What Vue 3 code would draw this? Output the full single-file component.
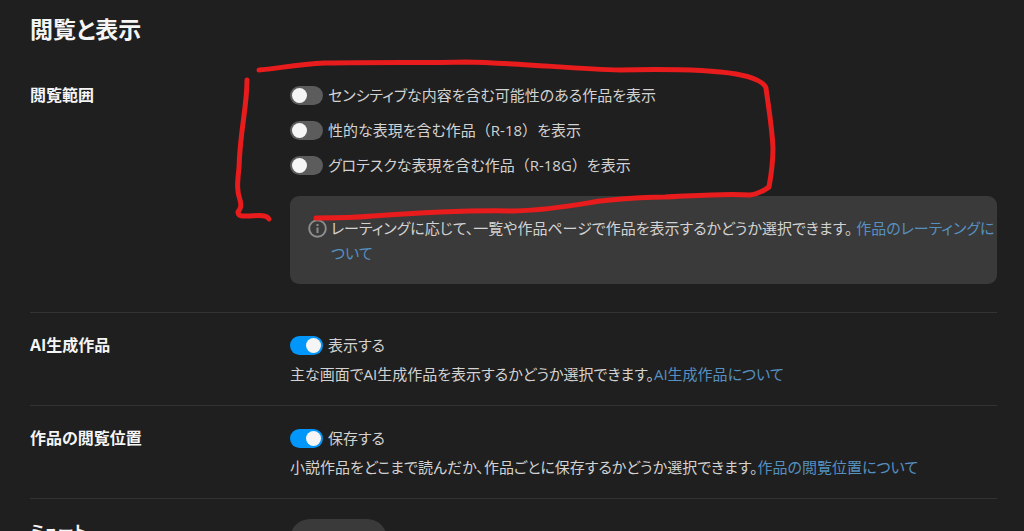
<script setup>
import { ref } from 'vue'

const ratings = ref([
  { id: 'sensitive', label: 'センシティブな内容を含む可能性のある作品を表示', mark: '', tail: '', on: false },
  { id: 'r18', label: '性的な表現を含む作品', mark: '（R-18）', tail: 'を表示', on: false },
  { id: 'r18g', label: 'グロテスクな表現を含む作品', mark: '（R-18G）', tail: 'を表示', on: false },
])
const showAi = ref(true)
const savePosition = ref(true)
</script>

<template>
  <main class="page">
    <h1 class="title">閲覧と表示</h1>

    <section class="section first">
      <h2 class="heading">閲覧範囲</h2>
      <div class="content">
        <div class="ratings">
          <label v-for="item in ratings" :key="item.id" class="option">
            <input v-model="item.on" type="checkbox" role="switch" class="switch" />
            <span>{{ item.label }}<span class="full">{{ item.mark }}</span>{{ item.tail }}</span>
          </label>
          <svg class="scribble" viewBox="230 55 550 170" aria-hidden="true">
            <path d="M259 70C276 69 296 64 325 63C380 62 430 63 465 62C520 63 575 69 620 70C665 69 710 70 736 74C752 77 764 82 766 88C768 104 772 126 773 148C773 165 771 176 769 187C764 190 760 194 750 195C725 193 690 196 665 197C640 197 622 199 600 201C575 205 550 210 515 211C470 210 415 213 373 216C350 218 330 218 316 218" />
            <path d="M247 80C247 108 240 130 239 168C237 185 237 191 240 200C242 207 240 209 238 212C238 217 243 216 250 216C260 215 267 215 269 219" />
          </svg>
        </div>
        <div class="note">
          <svg class="info" viewBox="0 0 19 19" aria-hidden="true">
            <circle cx="9.5" cy="9.5" r="8.3" />
            <path d="M9.5 8.5v5.5" />
            <path d="M9.5 5v2" />
          </svg>
          <p class="text">レーティングに応じて、一覧や作品ページで作品を表示するかどうか選択できます。 <a href="#rating">作品のレーティングについて</a></p>
        </div>
      </div>
    </section>

    <section class="section">
      <h2 class="heading">AI生成作品</h2>
      <div class="content">
        <label class="option">
          <input v-model="showAi" type="checkbox" role="switch" class="switch" />
          <span>表示する</span>
        </label>
        <p class="text">主な画面でAI生成作品を表示するかどうか選択できます。<a href="#ai">AI生成作品について</a></p>
      </div>
    </section>

    <section class="section">
      <h2 class="heading">作品の閲覧位置</h2>
      <div class="content">
        <label class="option">
          <input v-model="savePosition" type="checkbox" role="switch" class="switch" />
          <span>保存する</span>
        </label>
        <p class="text">小説作品をどこまで読んだか、作品ごとに保存するかどうか選択できます。<a href="#position">作品の閲覧位置について</a></p>
      </div>
    </section>

    <section class="section">
      <h2 class="heading">ミュート</h2>
      <div class="content">
        <button type="button" class="pill">設定する</button>
      </div>
    </section>
  </main>
</template>

<style>
html {
  background: #1f1f1f;
}
body {
  overflow: hidden;
  height: 100vh;
}
</style>

<style scoped>
.page {
  padding: 11px 27px 0 30px;
  color: #d2d2d2;
  font-family: "Open Sans", "Noto Sans CJK JP", sans-serif;
  font-size: 15px;
  line-height: 24px;
  font-feature-settings: "palt";
}
.title {
  margin: 0;
  color: #f5f5f5;
  font-size: 23px;
  line-height: 36px;
  font-weight: 700;
}
.section {
  display: grid;
  grid-template-columns: 260px 1fr;
  padding: 20px 0 18px;
  border-top: 1px solid #333;
}
.first {
  padding: 36px 0 28px;
  border-top: 0;
}
.heading {
  margin: 0;
  color: #f5f5f5;
  font-size: 16px;
  line-height: 24px;
  font-weight: 700;
}
.full {
  font-feature-settings: normal;
}
.ratings {
  position: relative;
  display: flex;
  flex-direction: column;
  gap: 11px;
}
.option {
  display: flex;
  align-items: center;
  gap: 5px;
}
.switch {
  appearance: none;
  display: flex;
  align-items: center;
  flex: none;
  box-sizing: border-box;
  width: 33px;
  height: 19px;
  margin: 0;
  padding: 2px;
  border-radius: 10px;
  background: #5c5c5c;
}
.switch::before {
  content: "";
  width: 15px;
  height: 15px;
  border-radius: 50%;
  background: #f5f5f5;
}
.switch:checked {
  justify-content: flex-end;
  background: #0096fa;
}
.scribble {
  position: absolute;
  top: -28px;
  left: -60px;
  z-index: 1;
  width: 550px;
  height: 170px;
  pointer-events: none;
  fill: none;
  stroke: #e81c1c;
  stroke-width: 5;
  stroke-linecap: round;
  stroke-linejoin: round;
}
.note {
  display: flex;
  gap: 4px;
  margin-top: 19px;
  padding: 20px 0 18px 18px;
  border-radius: 9px;
  background: #3a3a3a;
}
.info {
  flex: none;
  width: 19px;
  height: 19px;
  margin-top: 3px;
  fill: none;
  stroke: #8c8c8c;
  stroke-width: 2;
}
.text {
  margin: 0;
  line-height: 25px;
}
.section:not(.first) .text {
  margin-top: 5px;
}
a {
  color: #5690c0;
  text-decoration: none;
}
.pill {
  padding: 8px 20px;
  border: 0;
  border-radius: 20px;
  background: #3a3a3a;
  color: #d2d2d2;
  font: inherit;
  font-weight: 700;
  font-feature-settings: inherit;
}
</style>
